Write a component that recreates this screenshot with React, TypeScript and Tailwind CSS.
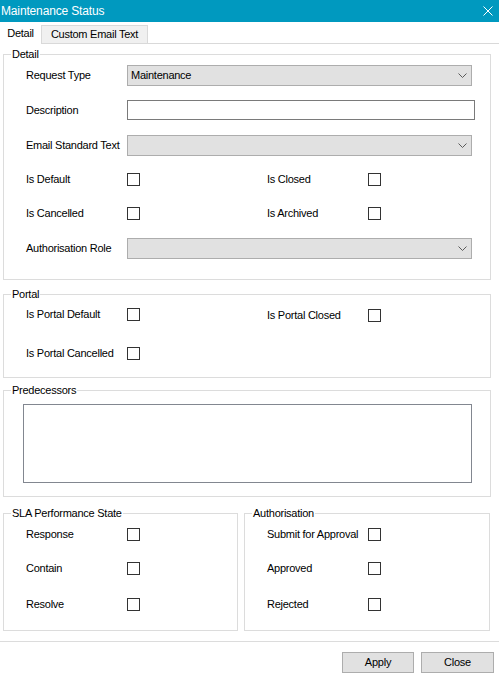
import React from "react";

type Field = { label: string };

const Checkbox = () => (
  <span className="block w-[13px] h-[13px] border border-[#333333] bg-white shrink-0" />
);

const Chevron = () => (
  <svg width="9" height="5" viewBox="0 0 9 5" fill="none" className="shrink-0">
    <polyline points="0.5,0.5 4.5,4.5 8.5,0.5" stroke="#5a5a5a" strokeWidth="1" />
  </svg>
);

const Combo = ({ value = "" }: { value?: string }) => (
  <div className="w-[345px] h-[21px] bg-[#e1e1e1] border border-[#adadad] flex items-center justify-between pl-[3px] pr-[4px]">
    <span>{value}</span>
    <Chevron />
  </div>
);

const Label = ({ label }: Field) => (
  <span className="w-[101px] shrink-0 whitespace-nowrap">{label}</span>
);

const CheckRow = ({ label }: Field) => (
  <div className="flex items-center h-[13px]">
    <Label label={label} />
    <Checkbox />
  </div>
);

const Group = ({
  title,
  className,
  children,
}: {
  title: string;
  className: string;
  children?: React.ReactNode;
}) => (
  <div className={`relative border border-[#dcdcdc] flex flex-col ${className}`}>
    <span className="absolute left-[7px] -top-[8px] bg-white px-px leading-[14px] whitespace-nowrap">
      {title}
    </span>
    {children}
  </div>
);

export default function App() {
  return (
    <div className="w-[499px] h-[678px] bg-white flex flex-col overflow-hidden text-black text-[11px] tracking-[-0.25px] font-['Liberation_Sans',Arial,sans-serif]">
      {/* window caption */}
      <div className="h-[22px] shrink-0 bg-[#0099bf] flex items-center justify-between pl-px pr-[6px] text-white text-[12px] tracking-[-0.15px]">
        <span>Maintenance Status</span>
        <svg width="10" height="10" viewBox="0 0 10 10" fill="none">
          <path d="M0.5 0.5 L9.5 9.5 M9.5 0.5 L0.5 9.5" stroke="#ffffff" strokeWidth="1" />
        </svg>
      </div>

      {/* tabs */}
      <div className="h-[22px] shrink-0 flex items-end">
        <div className="w-[41px] h-[22px] bg-white flex items-center justify-center">Detail</div>
        <div className="w-[107px] h-[19px] bg-[#f0f0f0] border border-[#d9d9d9] flex items-center justify-center">
          Custom Email Text
        </div>
        <div className="flex-1 h-px bg-[#d9d9d9]" />
      </div>

      <div className="flex flex-col pl-[3px]">
        <Group title="Detail" className="mt-[10px] w-[488px] h-[226px] pl-[22px]">
          <div className="mt-[10px] flex items-center">
            <Label label="Request Type" />
            <Combo value="Maintenance" />
          </div>
          <div className="mt-[14px] flex items-center">
            <Label label="Description" />
            <div className="w-[348px] h-[20px] border border-[#7a7a7a] bg-white" />
          </div>
          <div className="mt-[15px] flex items-center">
            <Label label="Email Standard Text" />
            <Combo />
          </div>
          <div className="mt-[17px] flex">
            <CheckRow label="Is Default" />
            <div className="ml-[127px]">
              <CheckRow label="Is Closed" />
            </div>
          </div>
          <div className="mt-[21px] flex">
            <CheckRow label="Is Cancelled" />
            <div className="ml-[127px]">
              <CheckRow label="Is Archived" />
            </div>
          </div>
          <div className="mt-[18px] flex items-center">
            <Label label="Authorisation Role" />
            <Combo />
          </div>
        </Group>

        <Group title="Portal" className="mt-[14px] w-[488px] h-[84px] pl-[22px]">
          <div className="mt-[13px] flex">
            <CheckRow label="Is Portal Default" />
            <div className="ml-[127px] mt-px">
              <CheckRow label="Is Portal Closed" />
            </div>
          </div>
          <div className="mt-[25px]">
            <CheckRow label="Is Portal Cancelled" />
          </div>
        </Group>

        <Group title="Predecessors" className="mt-[12px] w-[488px] h-[107px] pl-[19px]">
          <div className="mt-[13px] w-[449px] h-[79px] border border-[#828790] bg-white" />
        </Group>

        <div className="mt-[16px] flex">
          <Group title="SLA Performance State" className="w-[235px] h-[118px] pl-[22px]">
            <div className="mt-[14px]">
              <CheckRow label="Response" />
            </div>
            <div className="mt-[21px]">
              <CheckRow label="Contain" />
            </div>
            <div className="mt-[23px]">
              <CheckRow label="Resolve" />
            </div>
          </Group>
          <Group title="Authorisation" className="ml-[6px] w-[246px] h-[118px] pl-[22px]">
            <div className="mt-[14px]">
              <CheckRow label="Submit for Approval" />
            </div>
            <div className="mt-[21px]">
              <CheckRow label="Approved" />
            </div>
            <div className="mt-[23px]">
              <CheckRow label="Rejected" />
            </div>
          </Group>
        </div>
      </div>

      <div className="mt-[10px] h-px w-full bg-[#dcdcdc] shrink-0" />

      <div className="mt-[10px] flex justify-end gap-[7px] pr-[5px]">
        <button type="button" className="w-[72px] h-[21px] bg-[#e1e1e1] border border-[#adadad]">
          Apply
        </button>
        <button type="button" className="w-[73px] h-[21px] bg-[#e1e1e1] border border-[#adadad]">
          Close
        </button>
      </div>
    </div>
  );
}
